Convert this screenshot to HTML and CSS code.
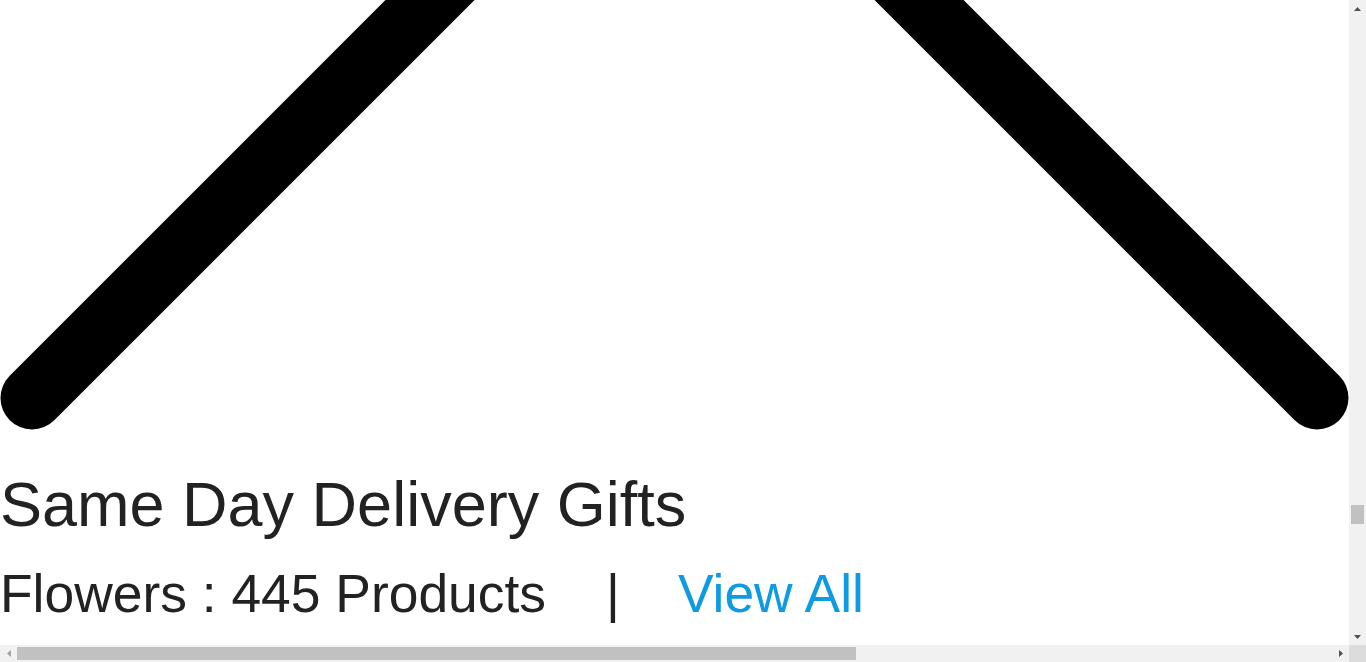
FILE: index.html
```html
<!DOCTYPE html>
<html lang="en">
<head>
<meta charset="utf-8">
<title>Same Day Delivery Gifts</title>
<link rel="stylesheet" href="styles.css">
</head>
<body>
<div class="viewport">
  <main class="page">
    <svg class="chevron" viewBox="0 0 1349 430" width="1349" height="430" aria-hidden="true">
      <polyline points="32,398 674.5,-244.5 1317,398" fill="none" stroke="#000" stroke-width="63" stroke-linecap="round" stroke-linejoin="round"/>
    </svg>
    <h1 class="title">Same Day Delivery Gifts</h1>
    <p class="meta"><span class="count">Flowers : 445 Products</span><span class="sep">|</span><a class="view-all" href="#">View All</a></p>
  </main>
  <div class="vscroll">
    <div class="sb-btn"><svg width="7" height="4" viewBox="0 0 7 4"><polygon points="0,4 3.5,0 7,4" fill="#505050"/></svg></div>
    <div class="vtrack"><div class="vthumb"></div></div>
    <div class="sb-btn"><svg width="7" height="4" viewBox="0 0 7 4"><polygon points="0,0 7,0 3.5,4" fill="#505050"/></svg></div>
  </div>
  <div class="hscroll">
    <div class="sb-btn"><svg width="4" height="7" viewBox="0 0 4 7"><polygon points="4,0 4,7 0,3.5" fill="#a3a3a3"/></svg></div>
    <div class="htrack"><div class="hthumb"></div></div>
    <div class="sb-btn"><svg width="4" height="7" viewBox="0 0 4 7"><polygon points="0,0 4,3.5 0,7" fill="#505050"/></svg></div>
  </div>
  <div class="corner"></div>
</div>
</body>
</html>
```
FILE: styles.css
```css
html, body {
  margin: 0;
  padding: 0;
  height: 100%;
  overflow: hidden;
  background: #fff;
}

.viewport {
  display: grid;
  grid-template-columns: 1fr 17px;
  grid-template-rows: 1fr 17px;
  width: 100vw;
  height: 100vh;
}

.page {
  overflow: hidden;
  font-family: "Liberation Sans", Arial, sans-serif;
  color: #222;
  min-width: 0;
  min-height: 0;
}

.chevron {
  display: block;
  width: 1349px;
  height: 430px;
}

.title {
  margin: 38px 0 0;
  font-size: 63px;
  line-height: 72px;
  font-weight: 400;
  white-space: nowrap;
}

.meta {
  margin: 22px 0 0;
  font-size: 53.4px;
  line-height: 64px;
  white-space: nowrap;
  display: flex;
}

.sep {
  margin: 0 58px 0 60px;
}

.view-all {
  color: #0f9be1;
  text-decoration: none;
}

.vscroll {
  background: #f1f1f1;
  display: flex;
  flex-direction: column;
}

.hscroll {
  background: #f1f1f1;
  display: flex;
}

.sb-btn {
  flex: 0 0 17px;
  width: 17px;
  height: 17px;
  display: flex;
  align-items: center;
  justify-content: center;
}

.vtrack {
  flex: 1;
  display: flex;
  flex-direction: column;
}

.vthumb {
  margin: 488px 2px 0 2px;
  height: 19px;
  background: #c1c1c1;
}

.htrack {
  flex: 1;
  display: flex;
  align-items: center;
}

.hthumb {
  width: 839px;
  height: 13px;
  background: #c1c1c1;
}

.corner {
  background: #dcdcdc;
}
```
